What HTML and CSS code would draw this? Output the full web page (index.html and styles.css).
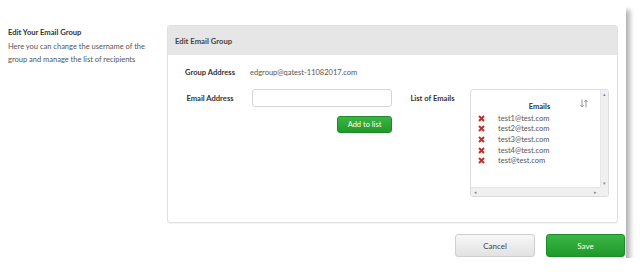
FILE: index.html
```html
<!DOCTYPE html>
<html lang="en">
<head>
    <meta charset="UTF-8">
    <title>Edit Email Group</title>
    <link rel="stylesheet" href="styles.css">
</head>
<body>
    <div class="window">
        <div class="content">
            <div class="intro">
                <h2>Edit Your Email Group</h2>
                <p>Here you can change the username of the group and manage the list of recipients</p>
            </div>
            <div class="panel">
                <div class="panel-head">Edit Email Group</div>
                <div class="panel-body">
                    <label class="field-label">Group Address</label>
                    <div class="value">edgroup@qatest-11082017.com</div>

                    <label class="field-label" for="email">Email Address</label>
                    <input type="text" id="email" class="text-input">
                    <label class="field-label list-label">List of Emails</label>
                    <div class="list-box">
                        <div class="list-scroll">
                            <div class="list-head">
                                <span class="list-title">Emails</span>
                                <svg class="sort-icon" width="8" height="9" viewBox="0 0 8 9">
                                    <path d="M2 0.5v7M0.5 6l1.5 2 1.5-2M6 8.5v-7M4.5 3l1.5-2 1.5 2" fill="none" stroke="#999" stroke-width="1"/>
                                </svg>
                            </div>
                            <ul class="email-list">
                                <li><svg class="del" width="7" height="7" viewBox="0 0 7 7"><path d="M1 1l5 5M6 1l-5 5" stroke="#c0302b" stroke-width="2"/></svg>test1@test.com</li>
                                <li><svg class="del" width="7" height="7" viewBox="0 0 7 7"><path d="M1 1l5 5M6 1l-5 5" stroke="#c0302b" stroke-width="2"/></svg>test2@test.com</li>
                                <li><svg class="del" width="7" height="7" viewBox="0 0 7 7"><path d="M1 1l5 5M6 1l-5 5" stroke="#c0302b" stroke-width="2"/></svg>test3@test.com</li>
                                <li><svg class="del" width="7" height="7" viewBox="0 0 7 7"><path d="M1 1l5 5M6 1l-5 5" stroke="#c0302b" stroke-width="2"/></svg>test4@test.com</li>
                                <li><svg class="del" width="7" height="7" viewBox="0 0 7 7"><path d="M1 1l5 5M6 1l-5 5" stroke="#c0302b" stroke-width="2"/></svg>test@test.com</li>
                            </ul>
                        </div>
                        <div class="vscroll">
                            <span class="arrow">&#9652;</span>
                            <span class="arrow">&#9662;</span>
                        </div>
                        <div class="hscroll">
                            <span class="arrow">&#9666;</span>
                            <span class="arrow">&#9656;</span>
                        </div>
                        <div class="corner"></div>
                    </div>
                    <button class="btn btn-green add-btn">Add to list</button>
                </div>
            </div>
        </div>
        <div class="footer">
            <button class="btn btn-light">Cancel</button>
            <button class="btn btn-green btn-big">Save</button>
        </div>
    </div>
</body>
</html>
```

FILE: styles.css
```css
body {
    margin: 0;
    padding: 5px 0 0 0;
    background: #ffffff;
    font-family: 'Lato', 'Liberation Sans', sans-serif;
    color: #333;
}
.window {
    width: 626px;
    height: 253px;
    box-sizing: border-box;
    padding: 20px 0 0 8px;
    background: #ffffff;
    box-shadow: 4px 5px 5px rgba(0, 0, 0, 0.3);
}
.content {
    display: flex;
}
.intro {
    width: 159px;
    padding-top: 2px;
}
.intro h2 {
    margin: 0;
    font-size: 7.6px;
    line-height: 11px;
    font-weight: 700;
    color: #333;
}
.intro p {
    margin: 2px 0 0 0;
    width: 150px;
    font-size: 7.5px;
    line-height: 13px;
    color: #555;
}
.panel {
    width: 451px;
    height: 198px;
    box-sizing: border-box;
    border: 1px solid #e0e0e0;
    border-radius: 3px;
    box-shadow: 0 1px 1px rgba(0, 0, 0, 0.05);
    overflow: hidden;
}
.panel-head {
    height: 29px;
    line-height: 30px;
    padding-left: 7px;
    background: #e6e6e6;
    font-size: 7.7px;
    font-weight: 700;
    color: #444;
}
.panel-body {
    display: grid;
    grid-template-columns: 84px 140px 78px 139px;
    grid-template-rows: 22px 18px 26px;
    padding-top: 12px;
}
.field-label {
    font-size: 7.6px;
    font-weight: 700;
    text-align: center;
    line-height: 11px;
    align-self: center;
    color: #333;
}
.value {
    grid-column: 2 / 5;
    margin-left: -2px;
    font-size: 7.5px;
    line-height: 11px;
    color: #555;
}
.panel-body .value,
.panel-body .field-label:first-child {
    margin-bottom: 11px;
}
.text-input {
    width: 140px;
    height: 18px;
    box-sizing: border-box;
    border: 1px solid #d5d5d5;
    border-radius: 3px;
    margin: 0;
    padding: 0 4px;
}
.list-label {
    grid-column: 3;
    padding-left: 3px;
}
.list-box {
    grid-column: 4;
    grid-row: 2 / 5;
    width: 139px;
    height: 108px;
    box-sizing: border-box;
    border: 1px solid #dcdcdc;
    border-radius: 3px;
    display: grid;
    grid-template-columns: 1fr 8px;
    grid-template-rows: 1fr 9px;
    overflow: hidden;
}
.list-scroll {
    padding: 8px 0 0 0;
}
.list-head {
    display: flex;
    justify-content: center;
    position: relative;
    padding-left: 8px;
}
.list-title {
    font-size: 7.5px;
    font-weight: 700;
    line-height: 12px;
    margin-top: 3px;
    color: #333;
}
.sort-icon {
    position: absolute;
    right: 12px;
    top: 1px;
}
.email-list {
    list-style: none;
    margin: 0;
    padding: 0 0 0 7px;
}
.email-list li {
    display: flex;
    align-items: center;
    height: 10.6px;
    font-size: 7.5px;
    color: #555;
}
.del {
    margin-right: 13px;
}
.vscroll {
    background: #f0f0f0;
    border-left: 1px solid #e6e6e6;
    display: flex;
    flex-direction: column;
    justify-content: space-between;
    align-items: center;
}
.hscroll {
    background: #f0f0f0;
    border-top: 1px solid #e6e6e6;
    display: flex;
    justify-content: space-between;
    align-items: center;
    padding: 0 3px;
}
.corner {
    background: #f0f0f0;
}
.arrow {
    font-size: 5px;
    line-height: 8px;
    color: #888;
}
.btn {
    font-family: 'Lato', 'Liberation Sans', sans-serif;
    border-radius: 3px;
    cursor: pointer;
    padding: 0;
}
.btn-green {
    background: linear-gradient(#3cb546, #1f9a2a);
    border: 1px solid #1c8a26;
    color: #ffffff;
}
.add-btn {
    grid-column: 2;
    grid-row: 3;
    justify-self: end;
    align-self: end;
    width: 55px;
    height: 17px;
    font-size: 7.5px;
}
.footer {
    display: flex;
    justify-content: flex-end;
    gap: 11px;
    margin-top: 11px;
    padding-right: 1px;
}
.btn-light {
    width: 80px;
    height: 23px;
    background: linear-gradient(#f7f7f7, #e2e2e2);
    border: 1px solid #cfcfcf;
    color: #444;
    font-size: 8px;
}
.btn-big {
    width: 79px;
    height: 23px;
    font-size: 8px;
}
```
